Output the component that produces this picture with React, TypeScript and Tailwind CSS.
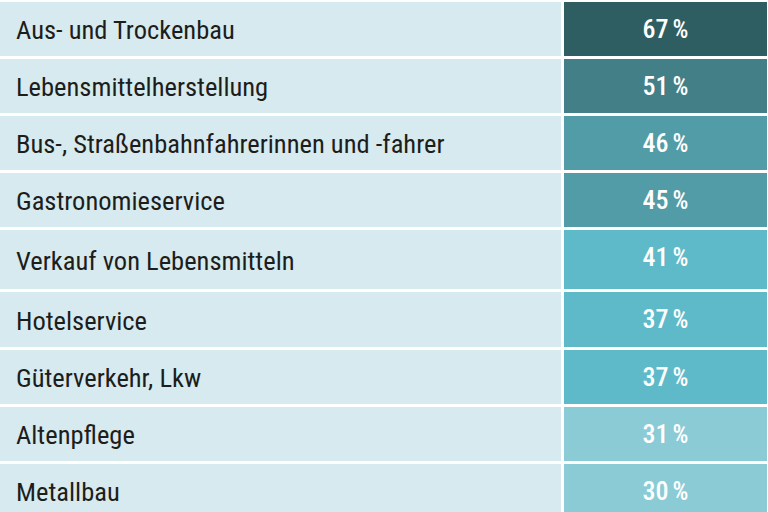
const rows = [
  { label: "Aus- und Trockenbau", value: 67, bg: "bg-[#2e5e62]", h: "h-[54px]" },
  { label: "Lebensmittelherstellung", value: 51, bg: "bg-[#437f86]", h: "h-[54px]" },
  { label: "Bus-, Straßenbahnfahrerinnen und -fahrer", value: 46, bg: "bg-[#529ca7]", h: "h-[54px]" },
  { label: "Gastronomieservice", value: 45, bg: "bg-[#529ca7]", h: "h-[54px]" },
  { label: "Verkauf von Lebensmitteln", value: 41, bg: "bg-[#5ebac8]", h: "h-[59px]" },
  { label: "Hotelservice", value: 37, bg: "bg-[#5ebac8]", h: "h-[55px]" },
  { label: "Güterverkehr, Lkw", value: 37, bg: "bg-[#5ebac8]", h: "h-[54px]" },
  { label: "Altenpflege", value: 31, bg: "bg-[#8acbd5]", h: "h-[54px]" },
  { label: "Metallbau", value: 30, bg: "bg-[#8acbd5]", h: "h-[54px]" },
];

export default function App() {
  return (
    <div className="w-[768px] h-[512px] overflow-hidden bg-white pt-[2px] pr-[1px] font-['Roboto_Condensed','Roboto',sans-serif]">
      <div className="flex flex-col gap-[3px]">
        {rows.map((row) => (
          <div key={row.label} className={`flex gap-[3px] ${row.h}`}>
            <div className="flex-1 flex items-center bg-[#d6eaef] pl-4 pt-[2px] text-[26.5px] text-[#1d1d1b]">
              {row.label}
            </div>
            <div className={`w-[203px] flex items-baseline justify-center pt-[12px] text-white font-medium ${row.bg}`}>
              <span className="text-[26px] leading-[30px]">{row.value}</span>
              <span className="ml-[4px] text-[25px] leading-[30px]">%</span>
            </div>
          </div>
        ))}
      </div>
    </div>
  );
}
